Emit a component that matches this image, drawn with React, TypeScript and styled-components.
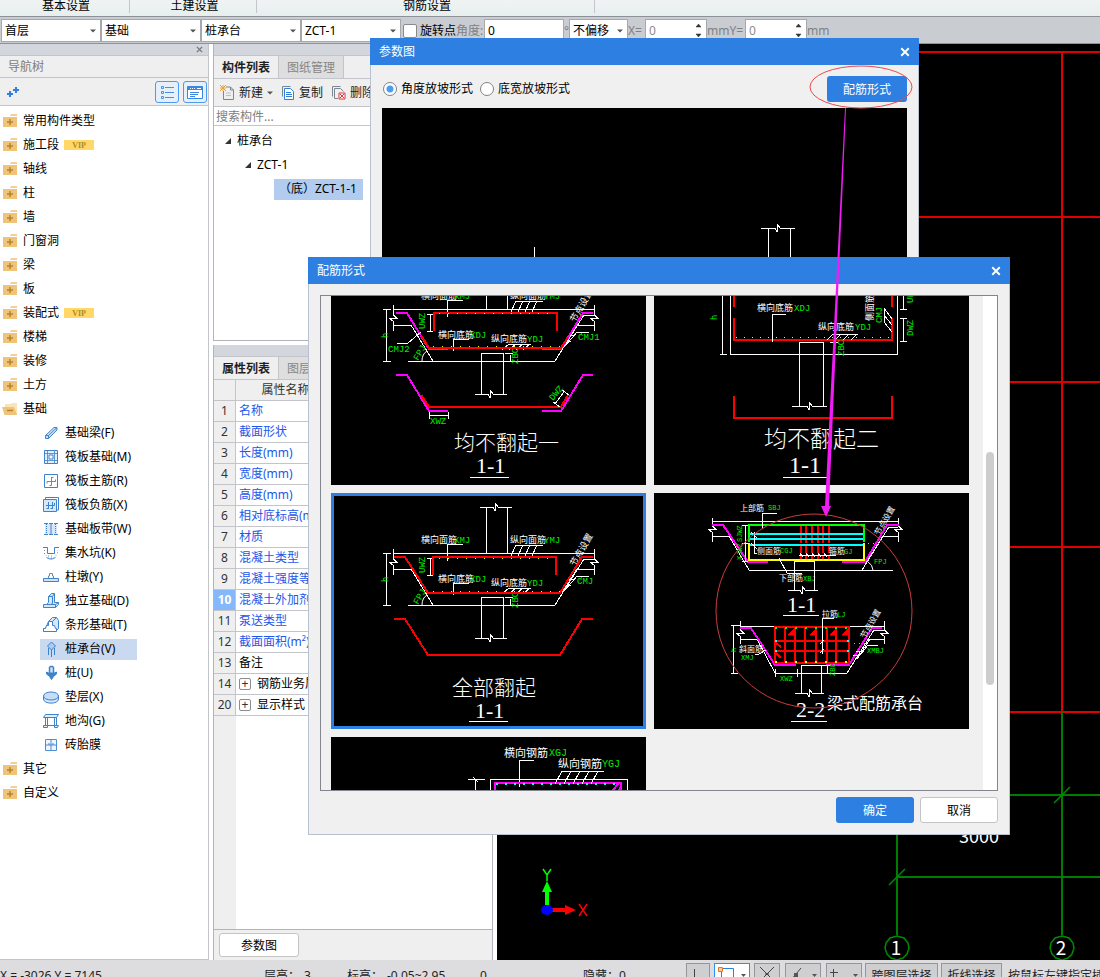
import React, { useLayoutEffect, useRef } from "react";
import styled, { createGlobalStyle, css } from "styled-components";

const GlobalStyle = createGlobalStyle`
  *, *::before, *::after { box-sizing: border-box; }
  body { margin: 0; background: #dcdcdf; }
  body, button, input, select, table {
    font-family: "Noto Sans", "Noto Sans CJK SC", sans-serif;
    font-size: 12px;
    line-height: 16px;
    color: #000;
  }
  button, input, select { margin: 0; padding: 0; border: 0; background: none; border-radius: 0; outline: none; }
  ul { margin: 0; padding: 0; list-style: none; }
`;

const blue = "#2d80e2";
const line = "#c3c5cb";
const panel = "#efefef";

/* ---------- window frame ---------- */

const Window = styled.div`
  position: relative;
  display: flex;
  flex-direction: column;
  height: 100vh;
  overflow: hidden;
  background: #fff;
`;

const Ribbon = styled.nav`
  display: flex;
  flex: none;
  height: 17px;
  padding-bottom: 3px;
  background: linear-gradient(#f0f3f4, #e8eeee);
  border-bottom: 1px solid #8d9298;
`;

const RibbonGroup = styled.div<{ $w: number }>`
  flex: none;
  width: ${(p) => p.$w}px;
  height: 13px;
  padding-left: 3px;
  line-height: 12px;
  text-align: center;
  border-right: 1px solid #c2c6ca;
  white-space: nowrap;
`;

const OptionBar = styled.div`
  display: flex;
  flex: none;
  align-items: center;
  height: 27px;
  padding: 1px 0 0 1px;
  background: #c9ccd1;
  border-bottom: 1px solid #8d9298;
  white-space: nowrap;
`;

const Field = styled.div<{ $w: number }>`
  display: flex;
  flex: none;
  align-items: center;
  width: ${(p) => p.$w}px;
  height: 23px;
  padding: 0 4px 0 3px;
  background: #fff;
  border: 1px solid #a6a8ab;
`;

const Select = styled.select`
  appearance: none;
  flex: 1;
  min-width: 0;
  height: 20px;
`;

const TextInput = styled.input<{ $muted?: boolean }>`
  flex: 1;
  min-width: 0;
  width: 100%;
  color: ${(p) => (p.$muted ? "#8c8c8c" : "#000")};
`;

const CheckLabel = styled.label`
  display: flex;
  align-items: center;
  gap: 3px;
  padding-left: 2px;
`;

const Checkbox = styled.input`
  appearance: none;
  width: 14px;
  height: 14px;
  background: #fff;
  border: 1px solid #8a8a8a;
  border-radius: 2px;
`;

const Muted = styled.label<{ $w?: number }>`
  flex: none;
  width: ${(p) => (p.$w ? `${p.$w}px` : "auto")};
  color: #7f8184;
`;

const Workspace = styled.main`
  display: flex;
  flex: 1;
  min-height: 0;
  gap: 4px;
`;

/* ---------- left navigation ---------- */

const NavPanel = styled.aside`
  display: flex;
  flex: none;
  flex-direction: column;
  width: 209px;
  border-right: 1px solid ${line};
  border-bottom: 1px solid ${line};
`;

const Strip = styled.div`
  display: flex;
  flex: none;
  align-items: center;
  justify-content: flex-end;
  height: 12px;
  padding-right: 5px;
  background: #d3d6dc;
  border-bottom: 1px solid ${line};
`;

const StripClose = styled.button`
  display: flex;
`;

const NavTitle = styled.h2`
  margin: 0;
  padding: 0 8px;
  height: 22px;
  font-size: 12px;
  font-weight: 400;
  line-height: 22px;
  color: #7d7d7d;
  background: ${panel};
  border-bottom: 1px solid ${line};
`;

const NavTools = styled.div`
  display: flex;
  align-items: center;
  gap: 4px;
  height: 28px;
  padding: 0 1px 0 7px;
  background: ${panel};
  border-bottom: 1px solid ${line};
`;

const Spacer = styled.span`
  flex: 1;
`;

const IconButton = styled.button`
  display: flex;
  align-items: center;
  justify-content: center;
`;

const ViewButton = styled(IconButton)`
  width: 24px;
  height: 22px;
  background: #e6f0fb;
  border: 1px solid #4b9cf0;
  border-radius: 3px;
`;

const NavTree = styled.ul`
  padding-top: 3px;
`;

const NavItem = styled.li`
  display: flex;
  align-items: center;
  height: 24px;
`;

const NavFolder = styled.button`
  display: flex;
  align-items: center;
  gap: 5px;
  padding-left: 2px;
  white-space: nowrap;
`;

const NavLeaf = styled.button<{ $active?: boolean }>`
  display: flex;
  align-items: center;
  gap: 6px;
  height: 21px;
  margin-left: 40px;
  padding: 0 22px 0 3px;
  background: ${(p) => (p.$active ? "#c9d9f0" : "transparent")};
  white-space: nowrap;
`;

const Vip = styled.span`
  width: 30px;
  height: 10px;
  font-family: "Liberation Serif", serif;
  font-size: 8px;
  font-weight: 700;
  line-height: 11px;
  text-align: center;
  color: #b08a20;
  background: #ffd869;
`;

/* ---------- middle column ---------- */

const MiddleColumn = styled.section`
  display: flex;
  flex: none;
  flex-direction: column;
  gap: 4px;
  width: 280px;
`;

const Dock = styled.section<{ $grow?: boolean }>`
  display: flex;
  flex-direction: column;
  flex: ${(p) => (p.$grow ? "1" : "none")};
  min-height: 0;
  height: ${(p) => (p.$grow ? "auto" : "297px")};
  border: 1px solid #b2b4ba;
  border-top: 0;
  border-bottom-width: ${(p) => (p.$grow ? "0" : "1px")};
  background: #fff;
`;

const Tabs = styled.div`
  display: flex;
  flex: none;
  height: 23px;
  background: ${panel};
  border-bottom: 1px solid ${line};
`;

const Tab = styled.button<{ $active?: boolean }>`
  width: 65px;
  padding-top: 1px;
  border-right: 1px solid ${line};
  ${(p) =>
    p.$active
      ? css`
          font-weight: 600;
          color: #1f1f1f;
        `
      : css`
          color: #868686;
          background: #dedede;
        `}
`;

const ListTools = styled.div`
  display: flex;
  flex: none;
  align-items: center;
  height: 28px;
  padding: 1px 0 0 6px;
  gap: 8px;
  overflow: hidden;
  background: ${panel};
  border-bottom: 1px solid ${line};
  white-space: nowrap;
`;

const ToolButton = styled.button`
  display: flex;
  align-items: center;
  gap: 4px;
  color: #1c1c1c;
`;

const Search = styled.input`
  flex: none;
  height: 19px;
  padding: 0 2px;
  background: #fff;
  border-bottom: 1px solid ${line};
  &::placeholder { color: #808080; opacity: 1; }
`;

const PartTree = styled.ul`
  padding-top: 3px;
`;

const PartNode = styled.li<{ $level: number }>`
  display: flex;
  align-items: center;
  gap: 5px;
  height: 24px;
  padding-left: ${(p) => 10 + p.$level * 20}px;
`;

const PartLeaf = styled.button`
  height: 21px;
  margin-left: 10px;
  padding: 0 6px 0 5px;
  background: #b1ccee;
  white-space: nowrap;
`;

const TableArea = styled.div`
  flex: 1;
  min-height: 0;
  overflow: hidden;
  background: linear-gradient(90deg, ${panel} 22px, #fff 22px);
  border-bottom: 1px solid #b2b4ba;
`;

const PropTable = styled.table`
  width: 100%;
  border-collapse: separate;
  border-spacing: 0;
  table-layout: fixed;
  th, td { padding: 0; height: 21px; border-bottom: 1px solid ${line}; white-space: nowrap; overflow: hidden; }
`;

const HeadCell = styled.th<{ $w: number }>`
  width: ${(p) => p.$w}px;
  font-weight: 400;
  color: #333;
  background: ${panel};
  border-right: 1px solid ${line};
`;

const IndexCell = styled.th<{ $active?: boolean }>`
  font-weight: ${(p) => (p.$active ? 700 : 400)};
  color: ${(p) => (p.$active ? "#fff" : "#333")};
  background: ${(p) => (p.$active ? "#85b8fb" : panel)};
  border-right: 1px solid ${line};
`;

const NameCell = styled.td<{ $link?: boolean }>`
  color: ${(p) => (p.$link ? "#1c57ea" : "#000")};
  border-right: 1px solid ${line};
`;

const NameBox = styled.div`
  display: flex;
  align-items: center;
  gap: 6px;
  padding-left: 3px;
`;

const Expander = styled.button`
  width: 12px;
  height: 12px;
  font-size: 12px;
  line-height: 10px;
  color: #333;
  background: #fff;
  border: 1px solid #8c8c8c;
  border-radius: 2px;
`;

const DockFooter = styled.div`
  flex: none;
  height: 30px;
  padding: 3px 5px;
  background: ${panel};
`;

const PlainButton = styled.button<{ $w: number; $h: number }>`
  width: ${(p) => p.$w}px;
  height: ${(p) => p.$h}px;
  padding-top: 2px;
  background: #fff;
  border: 1px solid #c4c4c4;
  border-radius: 3px;
`;

const PrimaryButton = styled.button<{ $w: number }>`
  width: ${(p) => p.$w}px;
  height: 26px;
  padding-top: 2px;
  color: #fff;
  background: ${blue};
  border-radius: 3px;
`;

/* ---------- drawing canvas ---------- */

const Canvas = styled.section`
  flex: 1;
  min-width: 0;
  background: #000;
`;

const FullSvg = styled.svg`
  display: block;
  width: 100%;
  height: 100%;
`;

/* ---------- dialogs ---------- */

const Dialog = styled.section<{ $x: number; $y: number; $w: number }>`
  position: absolute;
  left: ${(p) => p.$x}px;
  top: ${(p) => p.$y}px;
  width: ${(p) => p.$w}px;
  background: #f0f0f0;
  border: 1px solid #b8c1d0;
  border-top: 0;
`;

const DialogHeader = styled.header`
  display: flex;
  align-items: center;
  justify-content: space-between;
  height: 27px;
  margin: 0 -1px;
  padding: 0 9px;
  color: #fff;
  background: ${blue};
`;

const DialogClose = styled.button`
  display: flex;
`;

const RadioRow = styled.div`
  display: flex;
  align-items: center;
  gap: 7px;
  height: 43px;
  padding: 4px 11px 0 12px;
`;

const RadioLabel = styled.label`
  display: flex;
  align-items: center;
  gap: 4px;
`;

const Radio = styled.input`
  appearance: none;
  width: 14px;
  height: 14px;
  background: #fff;
  border: 1px solid #828282;
  border-radius: 50%;
  &:checked { background: radial-gradient(circle, #4a9cf5 3px, #fff 4px); }
`;

const Preview = styled.div`
  height: 440px;
  margin: 0 11px 12px;
  background: #000;
`;

const Gallery = styled.div`
  display: flex;
  height: 496px;
  margin: 11px 11px 0;
  border: 1px solid #83858f;
`;

const GalleryScroll = styled.div`
  flex: 1;
  display: grid;
  grid-template-columns: repeat(2, 315px);
  gap: 8px;
  align-content: start;
  padding: 8px 10px;
  overflow: hidden;
`;

const Card = styled.button<{ $selected?: boolean }>`
  display: block;
  height: 236px;
  background: #000;
  box-shadow: ${(p) => (p.$selected ? `inset 0 0 0 3px ${blue}` : "none")};
`;

const Track = styled.div`
  flex: none;
  width: 14px;
  padding: 156px 3px 0;
  background: #fff;
`;

const Thumb = styled.div`
  height: 233px;
  background: #cdcdcd;
  border-radius: 4px;
`;

const DialogFooter = styled.footer`
  display: flex;
  justify-content: flex-end;
  gap: 6px;
  padding: 6px 11px 11px;
`;

const Markup = styled.svg`
  position: absolute;
  inset: 0;
  width: 100%;
  height: 100%;
  pointer-events: none;
`;

/* ---------- status bar ---------- */

const StatusBar = styled.footer`
  flex: none;
  height: 17px;
  overflow: hidden;
  background: #dddde0;
`;

const StatusRow = styled.div`
  display: flex;
  height: 30px;
  padding-top: 3px;
  white-space: nowrap;
`;

const StatusText = styled.span<{ $w?: number }>`
  flex: none;
  width: ${(p) => (p.$w ? `${p.$w}px` : "auto")};
  line-height: 26px;
  color: #222;
`;

const StatusButton = styled.button<{ $w: number; $on?: boolean }>`
  display: flex;
  flex: none;
  justify-content: center;
  width: ${(p) => p.$w}px;
  height: 26px;
  line-height: 24px;
  color: #222;
  background: ${(p) => (p.$on ? "#fff" : "#cfcfd2")};
  border: 1px solid ${(p) => (p.$on ? "#2d90f0" : "#96969a")};
`;

const StatusGroup = styled.div<{ $gap: number }>`
  display: flex;
  gap: ${(p) => p.$gap}px;
  padding-right: ${(p) => p.$gap}px;
`;

/* ---------- small glyphs ---------- */

const Caret = () => (
  <svg width="6" height="4" viewBox="0 0 6 4" aria-hidden="true">
    <path d="M0 0.500h6L3 3.500z" fill="#555" />
  </svg>
);

const Spin = () => (
  <svg width="7" height="15" viewBox="0 0 7 15" aria-hidden="true">
    <path d="M1 4h5L3.500 1zM1 11h5l-2.500 3z" fill="#333" stroke="#333" strokeWidth="0.500" />
  </svg>
);

const Cross = ({ size, color, w = 1.5 }: { size: number; color: string; w?: number }) => (
  <svg width={size} height={size} viewBox="0 0 8 8" aria-hidden="true">
    <path d="M1 1l6 6M7 1l-6 6" stroke={color} strokeWidth={w} fill="none" />
  </svg>
);

const TreeArrow = () => (
  <svg width="8" height="8" viewBox="0 0 8 8" aria-hidden="true">
    <path d="M7 1v6H1z" fill="#333" />
  </svg>
);

const Folder = ({ open }: { open?: boolean }) =>
  open ? (
    <svg width="16" height="14" viewBox="0 0 16 14" aria-hidden="true">
      <path d="M3 4V2h6l1-1h5v11H3z" fill="#fbe3b4" />
      <path d="M0 5h12l3 8H2.500z" fill="#eec47c" />
      <path d="M5 8.500h6" stroke="#b88424" strokeWidth="1.500" />
    </svg>
  ) : (
    <svg width="16" height="14" viewBox="0 0 16 14" aria-hidden="true">
      <path d="M1 3h14v10H1z" fill="#eec47c" />
      <path d="M8 2l1-2h6v2z" fill="#f3cf92" />
      <path d="M5 8h6M8 5v6" stroke="#b88424" strokeWidth="1.500" />
    </svg>
  );

const leafArt: Record<string, React.ReactNode> = {
  beam: <path d="M2.500 10.500l8.500-8h3v2.500l-8.500 8.500h-3zM2.500 10.500h3v3M5.500 10.500l8.500-8" fill="#cfe2f8" />,
  raft: (
    <>
      <path d="M1.500 1.500h13v13h-13z" fill="#e4effb" />
      <path d="M4.500 1.500v13M11.500 1.500v13M1.500 4.500h13M1.500 11.500h13" strokeWidth="0.800" />
      <path d="M6 6h4v4H6z" fill="#fff" />
    </>
  ),
  mainbar: (
    <>
      <path d="M1.500 1.500h13v13h-13z" fill="#fff" />
      <path d="M4 8.500h8.500v-2M4 8.500v2M8.500 4v8.500h-2M8.500 4.500h2" stroke="#75899c" />
    </>
  ),
  negbar: (
    <>
      <path d="M2.500 3V0.500h13v12.500H14" />
      <path d="M0.500 2.500h13v12h-13z" fill="#d7e7fa" />
      <path d="M5.500 5v7M9.500 5v7M3.500 11.500h2M7.500 11.500h2M3 8.500h8.500V6" />
    </>
  ),
  strip: (
    <>
      <path d="M2 3h12v10H2z" fill="#d7e7fa" stroke="none" />
      <path d="M1 2.500h4M11 2.500h4M1 13.500h4M11 13.500h4M8 2v12M6 2.500h4M6 13.500h4" />
      <path d="M3.500 3v10M12.500 3v10" strokeDasharray="1 1" />
    </>
  ),
  pit: (
    <>
      <path d="M0 2.500h4.500v6h7v-6H16" />
      <path d="M1.500 5v4l4 4h5l4-4V5M5 11h6" strokeDasharray="1 2" stroke="#6f8fae" />
      <path d="M3.500 12.500c3 2 6 2 9 0" />
    </>
  ),
  pier: (
    <>
      <path d="M5.500 9V7h1V4.500h3V7h1v2" stroke="#75899c" />
      <path d="M0.500 9.500h15v3H0.500z" fill="#cfe2f8" />
    </>
  ),
  pad: (
    <>
      <path d="M0.500 14.500v-3h3l2-2v-6l3-3h3v9h4v2l-3 3z" fill="#d7e7fa" />
      <path d="M5.500 3.500h4v7l-2 1h5v3M9.500 3.500l2-3M12.500 11.500l3-2M3.500 11.500h4" />
    </>
  ),
  stripbase: (
    <>
      <path d="M0.500 14.500v-3h2l3-7 4-4h4l2 3v8l-3 3z" fill="#d7e7fa" />
      <path d="M0.500 14.500v-3h2l1-3h2v-4h4v4h2l1 3h1v3z" fill="#fff" />
      <path d="M9.500 4.500l4-4" />
    </>
  ),
  cap: <path d="M8.500 1l4 4-4 4-4-4zM8.500 9v7M5.500 7v7M11.500 7v7" fill="#a9ccf1" />,
  pile: (
    <>
      <path d="M6.500 8V2.500l1-1h2l1 1V8" fill="#cfe2f8" strokeWidth="1.500" />
      <path d="M3.500 7l2 1h6l2-1v2l-2.500 2h-5L3.500 9zM6.500 11.500h4l-2 3z" fill="#3c82cc" />
    </>
  ),
  cushion: (
    <>
      <path d="M0.500 7v3c0 5.500 15 5.500 15 0V7z" fill="#d7e7fa" />
      <ellipse cx="8" cy="7" rx="7.500" ry="4" fill="#c7dcf5" />
    </>
  ),
  trench: <path d="M2.500 1.500h13l-2 3H0.500zM2.500 4.500v8M4.500 4.500v8M11.500 4.500v8M13.500 4.500v8M0.500 12.500h4v2h-4zM4.500 12.500h7M11.500 12.500h4l-1 2h-3z" fill="#e4effb" />,
  brick: <path d="M2.500 2.500h11v11h-11zM8 2.500v11M2.500 8h11M6 6v2M10 6v2" fill="#eef5fd" strokeWidth="0.900" />,
};

const LeafIcon = ({ kind }: { kind: string }) => (
  <svg width="16" height="16" viewBox="0 0 16 16" fill="none" stroke="#3c82cc" aria-hidden="true">
    {leafArt[kind]}
  </svg>
);

/* ---------- CAD drawing helpers ---------- */

const CadText = styled.text<{ $size?: number; $kind?: "label" | "code" | "title" | "num" }>`
  font-size: ${(p) => p.$size ?? 9}px;
  fill: ${(p) => (p.$kind === "code" ? "#00ee00" : "#fff")};
  font-weight: ${(p) => (p.$kind === "title" ? 300 : 400)};
  font-family: ${(p) =>
    p.$kind === "code"
      ? `"Liberation Mono", monospace`
      : p.$kind === "num"
        ? `"Liberation Serif", serif`
        : `"Noto Sans CJK SC", sans-serif`};
`;

type TextProps = { x: number; y: number; t: string; size?: number; rot?: number };

const Label = ({ x, y, t, size, rot }: TextProps) => (
  <CadText x={x} y={y} $size={size} transform={rot ? `rotate(${rot} ${x} ${y})` : undefined}>{t}</CadText>
);
const Code = ({ x, y, t, size, rot }: TextProps) => (
  <CadText $kind="code" x={x} y={y} $size={size ?? 9} transform={rot ? `rotate(${rot} ${x} ${y})` : undefined}>{t}</CadText>
);

const CardSvg = ({ children }: { children: React.ReactNode }) => (
  <svg width="315" height="236" viewBox="0 0 315 236" fill="none" stroke="none" aria-hidden="true">
    {children}
  </svg>
);

const Ink = ({ d, c = "#fff", w = 1, dash }: { d: string; c?: string; w?: number; dash?: string }) => (
  <path d={d} stroke={c} strokeWidth={w} strokeDasharray={dash} shapeRendering="crispEdges" />
);

/* horizontal cut line with a zigzag at its middle */
const HBreak = ({ x1, x2, y }: { x1: number; x2: number; y: number }) => {
  const m = Math.round((x1 + x2) / 2);
  return <Ink d={`M${x1} ${y}H${m - 3}L${m - 1} ${y + 4}V${y - 4}L${m + 2} ${y}H${x2}`} />;
};
/* vertical cut line with a zigzag at y */
const VBreak = ({ x, y1, y2, y }: { x: number; y1: number; y2: number; y: number }) => (
  <Ink d={`M${x} ${y1}V${y - 3}L${x + 4} ${y}H${x - 4}L${x} ${y + 3}V${y2}`} />
);

const Dots = ({ x1, x2, y, step, c, s = 1 }: { x1: number; x2: number; y: number; step: number; c: string; s?: number }) => {
  const xs: number[] = [];
  for (let x = x1; x <= x2; x += step) xs.push(x);
  return (
    <g fill={c} shapeRendering="crispEdges">
      {xs.map((x) => (
        <rect key={x} x={x} y={y} width={s} height={s} />
      ))}
    </g>
  );
};

/* slanted leader strokes hanging from a horizontal line */
const Rake = ({ x, y, h, dx, step, n, end }: { x: number; y: number; h: number; dx: number; step: number; n: number; end: number }) => (
  <Ink
    d={`M${x} ${y}H${end}` + Array.from({ length: n }, (_, i) => `M${x + i * step} ${y}l${-dx} ${h}`).join("")}
  />
);

const Caption = ({ x, y, t, size, nx, ny, ul, n = "1-1", ns = 22 }: { x: number; y: number; t: string; size: number; nx: number; ny: number; ul: [number, number]; n?: string; ns?: number }) => (
  <>
    <CadText $kind="title" $size={size} x={x} y={y}>{t}</CadText>
    <CadText $kind="num" $size={ns} x={nx} y={ny}>{n}</CadText>
    <Ink d={`M${ul[0]} 228H${ul[1]}`} />
  </>
);

/* concrete outline, column stubs, dimensions and labels that both trapezoid caps share */
const TrapezoidBase = () => (
  <>
    <HBreak x1={149} x2={181} y={14} />
    <Ink d="M155 14V60M176 14V60M62 60H263" />
    <VBreak x={62} y1={56} y2={82} y={69} />
    <VBreak x={263} y1={56} y2={82} y={69} />
    <Ink d="M62 76H80L102 112M77 112H224L253 66H263M263 76H246L231 100" />
    <Ink d="M55 60V112M52 60H60M52 112H60M99 65V82M96 65H102M96 82H102" />
    <Code x={57} y={89} t="h" rot={-90} />
    <Code x={94} y={80} t="UWZ" rot={-90} />
    <Label x={90} y={50} t="横向面筋" />
    <Code x={123} y={50} t="XMJ" />
    <Ink d="M132 51H116V68" />
    <Label x={179} y={50} t="纵向面筋" />
    <Code x={213} y={50} t="YMJ" />
    <Rake x={185} y={52} h={13} dx={6} step={7} n={4} end={212} />
    <Label x={107} y={89} t="横向底筋" />
    <Code x={139} y={89} t="XDJ" />
    <Ink d="M138 90H122V102" />
    <Label x={160} y={93} t="纵向底筋" />
    <Code x={196} y={93} t="YDJ" />
    <Rake x={178} y={95} h={6} dx={7} step={7} n={4} end={200} />
    <Label x={244} y={74} t="节点设置" rot={-60} />
    <Code x={87} y={112} t="FPJ" rot={-60} />
    <path d="M91 112Q91 105 96 102" stroke="#fff" />
    <Ink d="M150 145V104H172V145M174 104H182M179 106V112" />
    <HBreak x1={144} x2={176} y={145} />
    <Code x={187} y={115} t="ZBC" rot={-90} />
    <Dots x1={238} x2={252} y={84} step={6} c="#f0f" />
    <Ink d="M231 96H235L246 83H258M233 92H240M237 86H244" />
  </>
);

const CardBothFlatOne = () => (
  <CardSvg>
    <TrapezoidBase />
    <Ink c="#f0f" w={2} d="M65 64H76L98 100H117M211 100H230L252 64H262" />
    <Ink c="#f00" w={2} d="M90 86L98 99H230L237 88M103 82V64H226V82" />
    <Dots x1={108} x2={224} y={64} step={9} c="#ff0" />
    <Dots x1={102} x2={228} y={97} step={9} c="#ff0" />
    <Ink d="M66 94H77L90 83" />
    <Code x={57} y={103} t="CMJ2" />
    <Code x={247} y={91} t="CMJ1" />
    <Ink c="#f0f" w={2} d="M65 126H76L98 162H117M211 162H230L252 126H262" />
    <Ink c="#f00" w={2} d="M90 146L98 158H230L237 146" />
    <Ink d="M98 163V170M117 163V170M98 166H117M224 155L233 143M222 153L229 158M231 141L238 146" />
    <Code x={99} y={175} t="XWZ" />
    <Code x={222} y={152} t="DWZ" rot={-50} />
    <Caption x={123} y={201} t="均不翻起一" size={21} nx={145} ny={224} ul={[139, 178]} />
  </CardSvg>
);

const CardBothFlatTwo = () => (
  <CardSvg>
    <Ink d="M68 20V105M66 105H73M76 20V105H243V20" />
    <Code x={63} y={71} t="h" rot={-90} />
    <Ink c="#f00" w={2} d="M80 20V58M238 20V58M80 69V91H238V69" />
    <Dots x1={82} x2={236} y={88} step={8} c="#ff0" />
    <Label x={103} y={62} t="横向底筋" />
    <Code x={140} y={62} t="XDJ" />
    <Ink d="M132 65H118V93" />
    <Label x={164} y={81} t="纵向底筋" />
    <Code x={201} y={81} t="YDJ" />
    <Rake x={179} y={85} h={6} dx={6} step={8} n={4} end={204} />
    <Label x={219} y={72} t="侧面筋" rot={-90} />
    <Code x={228} y={74} t="CMJ" rot={-90} />
    <Ink d="M230 59V73M230 59L238 70M230 66L238 76M230 73L238 83" />
    <Ink d="M249 20V60M246 60H253M249 69V92M246 69H253M246 92H253" />
    <Code x={259} y={54} t="UWZ" rot={-90} />
    <Code x={259} y={87} t="DWZ" rot={-90} />
    <Ink d="M145 157V93H169V157M176 93H184M180 93V105" />
    <HBreak x1={138} x2={173} y={157} />
    <Code x={190} y={107} t="ZBC" rot={-90} />
    <Ink c="#f00" w={2} d="M80 147V169H238V147" />
    <Caption x={110} y={198} t="均不翻起二" size={23} nx={135} ny={224} ul={[129, 173]} ns={24} />
  </CardSvg>
);

const CardAllUp = () => (
  <CardSvg>
    <TrapezoidBase />
    <Ink c="#f00" w={2} d="M63 64H74L97 100H229L251 64H262M102 82V64H225V82" />
    <Dots x1={108} x2={224} y={65} step={9} c="#ff0" />
    <Dots x1={102} x2={228} y={98} step={9} c="#ff0" />
    <Code x={246} y={91} t="CMJ" />
    <Ink c="#f00" w={2} d="M63 126H74L97 162H229L251 126H262" />
    <Caption x={121} y={202} t="全部翻起" size={21} nx={144} ny={225} ul={[138, 177]} />
  </CardSvg>
);

const CardBeamCap = () => (
  <CardSvg>
    <Ink d="M58 28H244" />
    <VBreak x={58} y1={25} y2={49} y={36} />
    <VBreak x={244} y1={25} y2={49} y={36} />
    <Ink d="M58 43H75L95 77H239M208 77L235 34H244M244 43H229L212 70" />
    <Ink c="#f0f" w={2} d="M58 32H69L94 69H114M188 69H211L233 32H245" />
    <Ink c="#f00" w={2} dash="8 2" d="M147 32V67M152 32V67M158 32V67M164 32V67M169 32V67M175 32V67" />
    <Ink c="#0ff" w={2} d="M95 41H210M95 46H210M95 52H210" />
    <Ink c="#0f0" w={2} d="M95 49V32H210V49" />
    <Ink c="#ff0" w={2} d="M95 50V67H210V50" />
    <Label x={86} y={18} t="上部筋" size={8} />
    <Code x={114} y={17} t="SBJ" size={7} />
    <Ink d="M123 20H108V36M100 39V60M100 60H103M97 39L103 45M97 50L103 56" />
    <Label x={103} y={61} t="侧面筋" size={8} />
    <Code x={126} y={60} t="CGJ" size={7} />
    <Label x={175} y={61} t="箍筋" size={8} />
    <Code x={190} y={61} t="GJ" size={7} />
    <Ink d="M145 62H182M146 60l3 4M152 60l3 4M158 60l3 4M164 60l3 4M170 60l3 4" />
    <Ink d="M91 32V68M88 32H94M88 50H94M88 68H94" />
    <Code x={88} y={67} t="XJWZ" size={7} rot={-90} />
    <Code x={88} y={49} t="SJWZ" size={7} rot={-90} />
    <Label x={125} y={88} t="下部筋" size={8} />
    <Code x={149} y={88} t="XBJ" size={7} />
    <Ink d="M125 65L133 80H148M140 97V68H160V97" />
    <HBreak x1={134} x2={164} y={97} />
    <path d="M213 68Q219 72 219 77" stroke="#fff" />
    <Code x={220} y={71} t="FPJ" size={7} />
    <Label x={225} y={43} t="节点设置" size={8} rot={-60} />
    <Dots x1={214} x2={226} y={50} step={5} c="#0ff" />
    <CadText $kind="num" $size={22} x={133} y={119}>1-1</CadText>
    <Ink d="M129 122H165" />

    <Ink d="M86 133H230" />
    <VBreak x={86} y1={128} y2={151} y={140} />
    <VBreak x={230} y1={128} y2={151} y={140} />
    <Ink d="M86 146H103L121 180H193L220 137H230M230 146H216L203 166" />
    <Ink c="#f0f" w={2} d="M86 135H97L121 172H142M172 172H195L218 135H228" />
    <Ink c="#f00" w={2} d="M121 134H195V170H121ZM131 134V170M141 134V170M151 134V170M162 134V170M173 134V170M182 134V170M121 148H195M121 158H195M122 150L127 154M122 160L127 165" />
    <path d="M134 142l6-6v6zM156 142l6-6v6zM176 142l6-6v6zM188 142l6-6v6z" fill="#f00" stroke="#f00" />
    <Dots x1={121} x2={195} y={134} step={10} c="#0f0" s={2} />
    <Dots x1={121} x2={195} y={168} step={10} c="#ff0" s={2} />
    <Dots x1={121} x2={195} y={147} step={72} c="#0ff" s={2} />
    <Dots x1={121} x2={195} y={157} step={72} c="#0ff" s={2} />
    <Label x={168} y={124} t="拉筋" size={8} />
    <Code x={183} y={124} t="LJ" size={7} />
    <Ink d="M180 125H168V161M166 151l4-4M166 160l4-4" />
    <Label x={85} y={159} t="斜面筋" size={8} />
    <Code x={87} y={167} t="XMJ" size={7} />
    <Ink d="M101 161H105L112 157M224 152H214L206 162H199M210 158H202" />
    <Code x={213} y={160} t="XMBJ" size={7} />
    <Label x={211} y={146} t="节点设置" size={8} rot={-60} />
    <Dots x1={200} x2={212} y={150} step={5} c="#0ff" />
    <Ink d="M79 132V180M77 132H86M77 180H84M121 176V184M143 176V184M121 180H143" />
    <Code x={82} y={159} t="h" size={7} rot={-90} />
    <Code x={126} y={188} t="XWZ" size={7} />
    <Ink d="M147 200V172H167V200M168 172H176M173 172V180" />
    <HBreak x1={141} x2={170} y={200} />
    <Code x={181} y={183} t="ZBC" size={7} rot={-90} />
    <CadText $size={16} x={173} y={216}>梁式配筋承台</CadText>
    <CadText $kind="num" $size={22} x={142} y={224}>2-2</CadText>
    <Ink d="M137 228H173" />
  </CardSvg>
);

const CardCage = () => (
  <CardSvg>
    <Label x={173} y={20} t="横向钢筋" size={11} />
    <Code x={218} y={19} t="XGJ" size={10} />
    <Ink d="M203 23H188V50" />
    <Label x={227} y={31} t="纵向钢筋" size={11} />
    <Code x={271} y={30} t="YGJ" size={10} />
    <Ink d="M159 236V42H296V236M144 42V236M137 42H154M142 40L147 45" />
    <Ink c="#f0f" w={2} d="M164 236V46H290V236M282 53L287 47M286 55L290 50" />
    <Rake x={231} y={34} h={13} dx={7} step={9} n={5} end={273} />
    <Dots x1={165} x2={290} y={46} step={9} c="#0ff" s={2} />
  </CardSvg>
);

/* ---------- data ---------- */

const folders: { name: string; vip?: boolean; open?: boolean; children?: [string, string][] }[] = [
  { name: "常用构件类型" },
  { name: "施工段", vip: true },
  { name: "轴线" },
  { name: "柱" },
  { name: "墙" },
  { name: "门窗洞" },
  { name: "梁" },
  { name: "板" },
  { name: "装配式", vip: true },
  { name: "楼梯" },
  { name: "装修" },
  { name: "土方" },
  {
    name: "基础",
    open: true,
    children: [
      ["beam", "基础梁(F)"],
      ["raft", "筏板基础(M)"],
      ["mainbar", "筏板主筋(R)"],
      ["negbar", "筏板负筋(X)"],
      ["strip", "基础板带(W)"],
      ["pit", "集水坑(K)"],
      ["pier", "柱墩(Y)"],
      ["pad", "独立基础(D)"],
      ["stripbase", "条形基础(T)"],
      ["cap", "桩承台(V)"],
      ["pile", "桩(U)"],
      ["cushion", "垫层(X)"],
      ["trench", "地沟(G)"],
      ["brick", "砖胎膜"],
    ],
  },
  { name: "其它" },
  { name: "自定义" },
];

const properties: { n: number; name: string; link?: boolean; group?: boolean }[] = [
  { n: 1, name: "名称", link: true },
  { n: 2, name: "截面形状", link: true },
  { n: 3, name: "长度(mm)", link: true },
  { n: 4, name: "宽度(mm)", link: true },
  { n: 5, name: "高度(mm)", link: true },
  { n: 6, name: "相对底标高(m)", link: true },
  { n: 7, name: "材质", link: true },
  { n: 8, name: "混凝土类型", link: true },
  { n: 9, name: "混凝土强度等级", link: true },
  { n: 10, name: "混凝土外加剂", link: true },
  { n: 11, name: "泵送类型", link: true },
  { n: 12, name: "截面面积(m²)", link: true },
  { n: 13, name: "备注" },
  { n: 14, name: "钢筋业务属性", group: true },
  { n: 20, name: "显示样式", group: true },
];

const cards: [string, () => React.ReactElement][] = [
  ["均不翻起一", CardBothFlatOne],
  ["均不翻起二", CardBothFlatTwo],
  ["全部翻起", CardAllUp],
  ["梁式配筋承台", CardBeamCap],
  ["钢筋", CardCage],
];

/* ---------- sections ---------- */

const Combo = ({ w, value, label }: { w: number; value: string; label: string }) => (
  <Field $w={w}>
    <Select aria-label={label} defaultValue={value}>
      <option>{value}</option>
    </Select>
    <Caret />
  </Field>
);

const Options = () => (
  <OptionBar>
    <Combo w={100} value="首层" label="楼层" />
    <Combo w={100} value="基础" label="类别" />
    <Combo w={100} value="桩承台" label="类型" />
    <Combo w={100} value="ZCT-1" label="构件" />
    <CheckLabel>
      <Checkbox type="checkbox" />
      旋转点
    </CheckLabel>
    <Muted htmlFor="angle" $w={28}>角度:</Muted>
    <Field $w={80}>
      <TextInput id="angle" defaultValue="0" />
    </Field>
    <Muted $w={5}>°</Muted>
    <Combo w={59} value="不偏移" label="偏移" />
    <Muted htmlFor="offx" $w={17}>X=</Muted>
    <Field $w={62}>
      <TextInput id="offx" $muted defaultValue="0" />
      <Spin />
    </Field>
    <Muted htmlFor="offy" $w={38}>mmY=</Muted>
    <Field $w={62}>
      <TextInput id="offy" $muted defaultValue="0" />
      <Spin />
    </Field>
    <Muted>mm</Muted>
  </OptionBar>
);

const Navigation = () => (
  <NavPanel>
    <Strip>
      <StripClose aria-label="关闭">
        <Cross size={7} color="#777" />
      </StripClose>
    </Strip>
    <NavTitle>导航树</NavTitle>
    <NavTools>
      <IconButton aria-label="添加">
        <svg width="13" height="12" viewBox="0 0 13 12" aria-hidden="true">
          <path d="M9 1v6M6 4h6M3 5v6M0 8h6" stroke="#2f7fdc" strokeWidth="2" />
        </svg>
      </IconButton>
      <Spacer />
      <ViewButton aria-label="列表视图">
        <svg width="14" height="14" viewBox="0 0 14 14" fill="none" stroke="#4a90e2" aria-hidden="true">
          <path d="M1.500 1.500h2v2h-2zM1.500 6.500h2v2h-2zM1.500 11.500h2v2h-2zM5 2.500h9M5 7.500h9M5 12.500h9" />
        </svg>
      </ViewButton>
      <ViewButton aria-label="面板视图">
        <svg width="16" height="14" viewBox="0 0 16 14" fill="none" stroke="#3c86df" aria-hidden="true">
          <path d="M0.500 1.500h15v12h-15z" fill="#fff" />
          <path d="M1 3h14" strokeWidth="4" />
          <path d="M3 3.500h1M5 3.500h1M7 3.500h1M10 3.500h4" stroke="#fff" />
          <path d="M3 7.500h9M3 9.500h8M3 11.500h5" />
        </svg>
      </ViewButton>
    </NavTools>
    <NavTree>
      {folders.map((f) => (
        <React.Fragment key={f.name}>
          <NavItem>
            <NavFolder>
              <Folder open={f.open} />
              {f.name}
              {f.vip && <Vip>VIP</Vip>}
            </NavFolder>
          </NavItem>
          {f.children?.map(([kind, name]) => (
            <NavItem key={kind}>
              <NavLeaf $active={kind === "cap"}>
                <LeafIcon kind={kind} />
                {name}
              </NavLeaf>
            </NavItem>
          ))}
        </React.Fragment>
      ))}
    </NavTree>
  </NavPanel>
);

const PartList = () => (
  <Dock>
    <Strip />
    <Tabs>
      <Tab $active>构件列表</Tab>
      <Tab>图纸管理</Tab>
    </Tabs>
    <ListTools>
      <ToolButton>
        <svg width="15" height="16" viewBox="0 0 15 16" fill="none" stroke="#7d8791" aria-hidden="true">
          <path d="M3.500 6v8.500h10V5l-3-3H6M10.500 2v3h3" />
          <path d="M6 8h5M6 10.500h5" stroke="#b9c0c8" />
          <path d="M0 0l6 6M6 0L0 6M3 0v6M0 3h6" stroke="#f0a030" />
        </svg>
        新建
        <Caret />
      </ToolButton>
      <ToolButton>
        <svg width="14" height="16" viewBox="0 0 14 16" fill="none" stroke="#2f7fdc" aria-hidden="true">
          <path d="M1.500 11.500v-10h8" stroke="#7d8791" />
          <path d="M3.500 3.500h6l3 3v8h-9z" fill="#fff" />
          <path d="M5 7.500h5M5 9.500h6M5 11.500h6" />
        </svg>
        复制
      </ToolButton>
      <ToolButton>
        <svg width="15" height="16" viewBox="0 0 15 16" fill="none" stroke="#7d8791" aria-hidden="true">
          <path d="M1.500 11.500v-10h8M3.500 13.500v-10h6l3 3M3.500 13.500H7" />
          <path d="M8 8h6v6H8z" fill="#fff" stroke="#d9363e" />
          <path d="M9 9l4 4M13 9l-4 4" stroke="#d9363e" />
        </svg>
        删除
      </ToolButton>
    </ListTools>
    <Search placeholder="搜索构件..." aria-label="搜索构件" />
    <PartTree>
      <PartNode $level={0}>
        <TreeArrow />
        桩承台
      </PartNode>
      <PartNode $level={1}>
        <TreeArrow />
        ZCT-1
      </PartNode>
      <PartNode $level={2}>
        <PartLeaf>（底）ZCT-1-1</PartLeaf>
      </PartNode>
    </PartTree>
  </Dock>
);

const PropertyList = () => (
  <Dock $grow>
    <Strip />
    <Tabs>
      <Tab $active>属性列表</Tab>
      <Tab>图层管理</Tab>
    </Tabs>
    <TableArea>
      <PropTable>
        <thead>
          <tr>
            <HeadCell $w={22} />
            <HeadCell $w={100}>属性名称</HeadCell>
            <HeadCell $w={156} />
          </tr>
        </thead>
        <tbody>
          {properties.map((p) => (
            <tr key={p.n}>
              <IndexCell scope="row" $active={p.n === 10}>{p.n}</IndexCell>
              <NameCell $link={p.link}>
                <NameBox>
                  {p.group && <Expander aria-label="展开">+</Expander>}
                  {p.name}
                </NameBox>
              </NameCell>
              <NameCell />
            </tr>
          ))}
        </tbody>
      </PropTable>
    </TableArea>
    <DockFooter>
      <PlainButton $w={80} $h={24}>参数图</PlainButton>
    </DockFooter>
  </Dock>
);

const AxisText = styled.text<{ $size: number }>`
  font-family: "Noto Sans CJK SC", sans-serif;
  font-size: ${(p) => p.$size}px;
  fill: #fff;
  text-anchor: middle;
`;

const Drawing = () => (
  <Canvas>
    <FullSvg fill="none" aria-label="平面图">
      <g stroke="#e00000" strokeWidth="2" shapeRendering="crispEdges">
        <path d="M300 8H1600M300 173H1600M300 338H1600M300 503H1600M300 668H1600M565 8V668" />
      </g>
      <g stroke="#007c00" strokeWidth="2" shapeRendering="crispEdges">
        <path d="M565 668V891M400 668V891M400 751H1600M400 833H1600" />
      </g>
      <g stroke="#008a00" strokeWidth="1.500">
        <path d="M557 759L573 743M392 841L408 825" />
        <path d="M400 892l7 2 4 5 1 5-2 6-4 4-6 2-6-2-4-4-2-6 1-5 4-5zM565 892l7 2 4 5 1 5-2 6-4 4-6 2-6-2-4-4-2-6 1-5 4-5z" />
      </g>
      <AxisText $size={18} x={482} y={799}>3000</AxisText>
      <AxisText $size={19} x={399} y={911}>1</AxisText>
      <AxisText $size={19} x={564} y={911}>2</AxisText>
      <path d="M50 861V847" stroke="#0f0" strokeWidth="4" />
      <path d="M50 837l5 11H45z" fill="#0f0" />
      <path d="M46 825l4 6 4-6M50 831v6" stroke="#0f0" strokeWidth="1.500" />
      <path d="M55 866H69" stroke="#f00" strokeWidth="4" />
      <path d="M79 866l-11-5v10z" fill="#f00" />
      <path d="M82 860l8 12M90 860l-8 12" stroke="#f00" strokeWidth="1.500" />
      <ellipse cx="50" cy="866" rx="6" ry="5" fill="#00f" />
    </FullSvg>
  </Canvas>
);

const ParameterDialog = () => (
  <Dialog $x={370} $y={38} $w={549} aria-label="参数图">
    <DialogHeader>
      参数图
      <DialogClose aria-label="关闭">
        <Cross size={10} color="#fff" />
      </DialogClose>
    </DialogHeader>
    <RadioRow>
      <RadioLabel>
        <Radio type="radio" name="slope" defaultChecked />
        角度放坡形式
      </RadioLabel>
      <RadioLabel>
        <Radio type="radio" name="slope" />
        底宽放坡形式
      </RadioLabel>
      <Spacer />
      <PrimaryButton $w={80}>配筋形式</PrimaryButton>
    </RadioRow>
    <Preview>
      <FullSvg fill="none" aria-hidden="true">
        <HBreak x1={379} x2={413} y={120} />
        <Ink d="M386 120V200M408 120V200M152 139V200M135 149H139" />
      </FullSvg>
    </Preview>
  </Dialog>
);

const RebarDialog = () => {
  const scroller = useRef<HTMLDivElement>(null);
  useLayoutEffect(() => {
    if (scroller.current) scroller.current.scrollTop = 55;
  }, []);
  return (
    <Dialog $x={308} $y={257} $w={702} aria-label="配筋形式">
      <DialogHeader>
        配筋形式
        <DialogClose aria-label="关闭">
          <Cross size={10} color="#fff" />
        </DialogClose>
      </DialogHeader>
      <Gallery>
        <GalleryScroll ref={scroller}>
          {cards.map(([name, Art]) => (
            <Card key={name} aria-label={name} $selected={name === "全部翻起"}>
              <Art />
            </Card>
          ))}
        </GalleryScroll>
        <Track>
          <Thumb />
        </Track>
      </Gallery>
      <DialogFooter>
        <PrimaryButton $w={78}>确定</PrimaryButton>
        <PlainButton $w={78} $h={26}>取消</PlainButton>
      </DialogFooter>
    </Dialog>
  );
};

const Status = () => (
  <StatusBar>
    <StatusRow>
      <StatusText $w={264}>X = -3026 Y = 7145</StatusText>
      <StatusText $w={40}>层高：</StatusText>
      <StatusText $w={43}>3</StatusText>
      <StatusText $w={40}>标高：</StatusText>
      <StatusText $w={93}>-0.05~2.95</StatusText>
      <StatusText $w={103}>0</StatusText>
      <StatusText $w={103}>隐藏：0</StatusText>
      <StatusGroup $gap={4}>
        <StatusButton $w={24} aria-label="正交">
          <svg width="12" height="20" viewBox="0 0 12 20" fill="none" stroke="#444"><path d="M2.500 5v9H10" /></svg>
        </StatusButton>
        <StatusButton $w={36} $on aria-label="捕捉">
          <svg width="30" height="20" viewBox="0 0 30 20" fill="none">
            <path d="M4 4.500h12.500V20M4.500 6v14" stroke="#2f7fdc" />
            <path d="M1.500 3.500h4v4h-4z" fill="#ffc79a" stroke="#e87722" />
            <path d="M24 10h5l-2.500 3z" fill="#555" />
          </svg>
        </StatusButton>
      </StatusGroup>
      <StatusGroup $gap={5}>
        <StatusButton $w={26} aria-label="交点">
          <svg width="20" height="20" viewBox="0 0 20 20" fill="none" stroke="#444"><path d="M3 3l14 14M17 3L3 17M8 10h4" /></svg>
        </StatusButton>
        <StatusButton $w={36} aria-label="中点">
          <svg width="30" height="20" viewBox="0 0 30 20" fill="none">
            <path d="M13 4L3 16" stroke="#444" />
            <path d="M6 9h4v4H6zM24 10h5l-2.500 3z" fill="#555" />
          </svg>
        </StatusButton>
      </StatusGroup>
      <StatusGroup $gap={3}>
        <StatusButton $w={36} aria-label="偏移">
          <svg width="30" height="20" viewBox="0 0 30 20" fill="none">
            <path d="M1 8.500h8M4.500 5v8" stroke="#444" />
            <path d="M24 10h5l-2.500 3z" fill="#555" />
          </svg>
        </StatusButton>
        <StatusButton $w={73}>跨图层选择</StatusButton>
        <StatusButton $w={61}>折线选择</StatusButton>
      </StatusGroup>
      <StatusText>&nbsp;按鼠标左键指定插入点</StatusText>
    </StatusRow>
  </StatusBar>
);

export default function App() {
  return (
    <>
      <GlobalStyle />
      <Window>
        <Ribbon>
          <RibbonGroup $w={130}>基本设置</RibbonGroup>
          <RibbonGroup $w={127}>土建设置</RibbonGroup>
          <RibbonGroup $w={338}>钢筋设置</RibbonGroup>
        </Ribbon>
        <Options />
        <Workspace>
          <Navigation />
          <MiddleColumn>
            <PartList />
            <PropertyList />
          </MiddleColumn>
          <Drawing />
        </Workspace>
        <Status />
        <ParameterDialog />
        <RebarDialog />
        <Markup fill="none" aria-hidden="true">
          <ellipse cx="861" cy="87" rx="51" ry="21" stroke="#ee4848" />
          <ellipse cx="814" cy="611" rx="98" ry="97" stroke="#cc3c3c" />
          <path d="M845 108H846L829 506H831L826 517L821 506H825Z" fill="#ef1cf3" />
        </Markup>
      </Window>
    </>
  );
}
